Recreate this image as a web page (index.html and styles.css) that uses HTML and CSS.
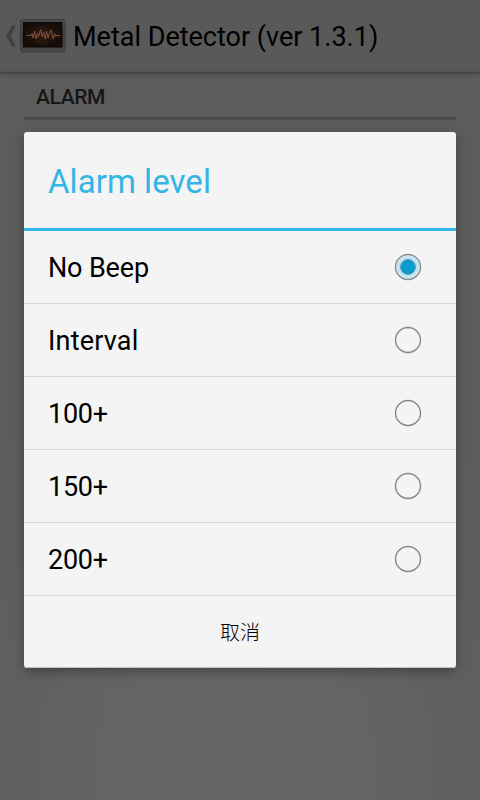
FILE: index.html
```html
<!DOCTYPE html>
<html lang="zh">
<head>
<meta charset="utf-8">
<title>Metal Detector</title>
<link rel="stylesheet" href="styles.css">
</head>
<body>
<svg class="symbols" width="0" height="0">
  <defs>
    <radialGradient id="glow"><stop offset="0" stop-color="#7fcdea"/><stop offset=".65" stop-color="#b5e0f0"/><stop offset="1" stop-color="#deeef4"/></radialGradient>
    <symbol id="off" viewBox="0 0 28 28"><circle cx="14" cy="14" r="12.500" fill="none" stroke="#878787" stroke-width="1.400"/></symbol>
    <symbol id="on" viewBox="0 0 28 28"><circle cx="14" cy="14" r="12.500" fill="url(#glow)" stroke="#878f92" stroke-width="1.400"/><circle cx="14" cy="14" r="7.300" fill="#0a9bce" stroke="#4393b0" stroke-width="1"/></symbol>
  </defs>
</svg>
<div class="screen">
  <header class="bar">
    <svg class="back" width="10" height="22" viewBox="0 0 10 22"><path d="M6 .5H9.800L4.800 11L9.800 21.500H6L.3 11Z" fill="#3f3f3f"/></svg>
    <svg class="logo" width="46" height="34" viewBox="0 0 46 34">
      <defs>
        <linearGradient id="frame" x1="0" y1="0" x2="0" y2="1"><stop offset="0" stop-color="#4d4d4d"/><stop offset=".5" stop-color="#404040"/><stop offset="1" stop-color="#4a4a4a"/></linearGradient>
        <radialGradient id="glass"><stop offset="0" stop-color="#2b1a12"/><stop offset="1" stop-color="#170d08"/></radialGradient>
      </defs>
      <rect x=".5" y=".5" width="44.500" height="32.500" rx="2.500" fill="url(#frame)" stroke="#3c3c3c"/>
      <rect x="3" y="3" width="39.500" height="25.500" fill="#090706"/>
      <rect x="4" y="4" width="37.500" height="23.500" fill="url(#glass)"/>
      <circle cx="22.500" cy="16" r="8" fill="none" stroke="#392419" stroke-width=".7"/>
      <circle cx="22.500" cy="16" r="5" fill="none" stroke="#392419" stroke-width=".7"/>
      <path d="M6.500 16.500H11L12 14.500L13 19L14.500 12L16 20L17.500 14L18.500 18L20.500 10.500L22 18L23.500 13L25 20L26.500 12L28 19L29.500 14L31 11L33 20L34.500 14L35.500 18L36.500 16.500H40" fill="none" stroke="#81513b" stroke-width="1"/>
      <path d="M20 31H25" stroke="#3c3c3c"/>
    </svg>
    <h1 class="app-name">Metal Detector (ver 1.3.1)</h1>
  </header>
  <h2 class="section">ALARM</h2>
  <div class="dialog">
    <h2 class="title">Alarm level</h2>
    <ul class="options">
      <li class="option"><span>No Beep</span><svg class="radio"><use href="#on"/></svg></li>
      <li class="option wide"><span>Interval</span><svg class="radio"><use href="#off"/></svg></li>
      <li class="option number"><span>100+</span><svg class="radio"><use href="#off"/></svg></li>
      <li class="option number"><span>150+</span><svg class="radio"><use href="#off"/></svg></li>
      <li class="option number"><span>200+</span><svg class="radio"><use href="#off"/></svg></li>
    </ul>
    <button class="cancel">取消</button>
  </div>
</div>
</body>
</html>
```
FILE: styles.css
```css
* { box-sizing: border-box; }
body { margin: 0; font-family: Roboto, "Noto Sans CJK SC", sans-serif; }
h1, h2, ul { margin: 0; padding: 0; font-weight: 400; }
.symbols { display: block; }
.screen {
  width: 480px;
  height: 800px;
  overflow: hidden;
  background: radial-gradient(ellipse 310px 560px at 235px 800px, #656565 0%, #646464 40%, #5c5c5c 100%);
}
.bar {
  height: 73px;
  padding: 0 0 1px 6px;
  display: flex;
  align-items: center;
  background: linear-gradient(#595959 0 69px, #555 69px 72px, #424242 72px);
  box-shadow: 0 1px 4px rgba(0, 0, 0, .25);
}
.back { margin-right: 4px; }
.logo { margin-right: 7px; }
.app-name {
  padding-top: 2px;
  font-size: 27px;
  line-height: 32px;
  color: #000;
  white-space: nowrap;
}
.section {
  height: 47px;
  margin: 0 24px 12px;
  padding: 12px 12px 0;
  border-bottom: 3px solid #484848;
  font-size: 21px;
  line-height: 24px;
  font-weight: 500;
  letter-spacing: -.4px;
  color: #161616;
}
.dialog {
  height: 536px;
  margin: 0 24px;
  border-radius: 3px;
  background: #f4f4f4;
  box-shadow: inset 0 -1px #bdbdbd, 0 4px 12px rgba(0, 0, 0, .3);
}
.title {
  height: 99px;
  padding: 30px 24px 0;
  border-bottom: 3px solid #33b5e5;
  font-size: 33px;
  line-height: 40px;
  letter-spacing: .05px;
  color: #33b5e5;
}
.options { list-style: none; }
.option {
  height: 73px;
  padding: 0 34px 0 24px;
  display: flex;
  align-items: center;
  justify-content: space-between;
  border-bottom: 1px solid #d7d7d7;
  font-size: 27px;
  line-height: 32px;
  letter-spacing: -.15px;
  color: #000;
}
.option span { padding-top: 2px; }
.wide { letter-spacing: .2px; }
.number { letter-spacing: -.25px; }
.radio {
  width: 28px;
  height: 28px;
}
.cancel {
  display: block;
  width: 100%;
  height: 72px;
  padding: 0;
  border: 0;
  background: none;
  font: 300 20px/24px "Noto Sans CJK SC", sans-serif;
  color: #000;
}
```
